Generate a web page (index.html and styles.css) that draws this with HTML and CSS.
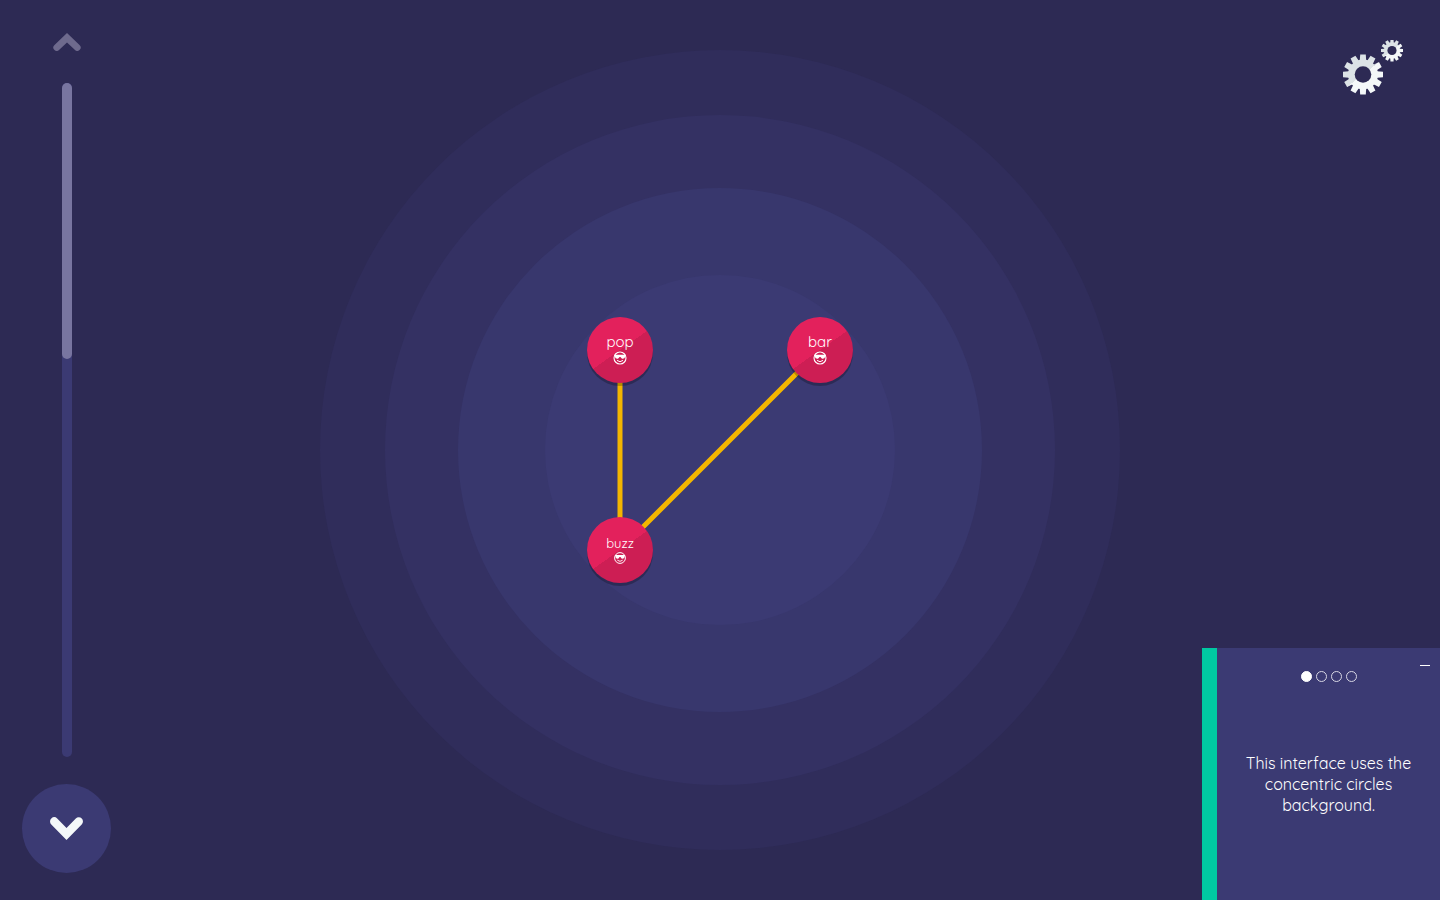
FILE: index.html
```html
<!DOCTYPE html>
<html lang="en">
<head>
<meta charset="utf-8">
<title>Concentric circles</title>
<link rel="stylesheet" href="styles.css">
</head>
<body>
<main class="app">
  <svg class="stage" viewBox="0 0 900 900" aria-label="Word graph">
    <defs>
      <linearGradient id="node-fill" gradientUnits="userSpaceOnUse" x1="-19" y1="-27" x2="19" y2="27">
        <stop offset="0.5" stop-color="#e3215c"/>
        <stop offset="0.5" stop-color="#cd1e54"/>
      </linearGradient>
      <g id="node">
        <circle class="node-shadow" cy="3" r="33"/>
        <circle r="33" fill="url(#node-fill)"/>
      </g>
      <g id="cool-face">
        <circle r="6" fill="none" stroke="#fff" stroke-width="1.100"/>
        <path d="M-5.600-3.200H5.600L4.600 0Q3.600 1 2 .8L.5-1H-.5L-2 .8Q-3.600 1-4.600 0Z" fill="#fff"/>
        <path d="M-3 2.400Q0 5 3 2.400" fill="none" stroke="#fff" stroke-width="1"/>
      </g>
    </defs>
    <circle class="ring-4" cx="450" cy="450" r="400"/>
    <circle class="ring-3" cx="450" cy="450" r="335"/>
    <circle class="ring-2" cx="450" cy="450" r="262"/>
    <circle class="ring-1" cx="450" cy="450" r="175"/>
    <path class="edge" d="M350 350V550L550 350"/>
    <g transform="translate(350 350)"><use href="#node"/><text class="label" y="-3">pop</text><use href="#cool-face" y="8"/></g>
    <g transform="translate(550 350)"><use href="#node"/><text class="label" y="-3">bar</text><use href="#cool-face" y="8"/></g>
    <g transform="translate(350 550)"><use href="#node"/><text class="label label-small" y="-2">buzz</text><use href="#cool-face" transform="translate(0 8) scale(.9)"/></g>
  </svg>

  <nav class="pager" aria-label="Scroll">
    <button class="up" aria-label="Up" disabled>
      <svg width="28" height="18" viewBox="0 0 28 18"><path d="M1 16.500A3.300 3.300 0 0 1 1.500 12L14 0L26.500 12A3.300 3.300 0 0 1 22 17L14 9.500L6 17A3.500 3.500 0 0 1 1 16.500Z"/></svg>
    </button>
    <div class="track" role="scrollbar" aria-label="Position" aria-controls="guide" aria-orientation="vertical" aria-valuenow="0"><div class="thumb"></div></div>
    <button class="down" aria-label="Down">
      <svg width="33" height="23" viewBox="0 0 33 23"><path d="M1.300 1.500A4.200 4.200 0 0 1 7.200 1.500L16.500 11L25.800 1.500A4.200 4.200 0 0 1 31.700 7.500L16.500 23L1.300 7.500A4.200 4.200 0 0 1 1.300 1.500Z"/></svg>
    </button>
  </nav>

  <button class="settings" aria-label="Settings">
    <svg width="62" height="56" viewBox="0 0 62 56">
      <defs>
        <linearGradient id="metal" gradientUnits="userSpaceOnUse" x1="-13" y1="-17" x2="13" y2="17">
          <stop offset="0.5" stop-color="#dce3e6"/>
          <stop offset="0.5" stop-color="#f4f8f9"/>
        </linearGradient>
        <mask id="gear-mask" maskUnits="userSpaceOnUse" x="-21" y="-21" width="42" height="42">
          <g fill="#fff">
            <circle r="15"/>
            <path id="tooth" d="M-3.200-14L-2.800-20H2.800L3.200-14V14L2.800 20H-2.800L-3.200 14Z"/>
            <use href="#tooth" transform="rotate(30)"/>
            <use href="#tooth" transform="rotate(60)"/>
            <use href="#tooth" transform="rotate(90)"/>
            <use href="#tooth" transform="rotate(120)"/>
            <use href="#tooth" transform="rotate(150)"/>
          </g>
          <circle r="8.300" fill="#000"/>
        </mask>
        <g id="gear"><rect x="-21" y="-21" width="42" height="42" fill="url(#metal)" mask="url(#gear-mask)"/></g>
      </defs>
      <use href="#gear" transform="translate(21 34.500)"/>
      <use href="#gear" transform="translate(50 10.500) scale(.55)"/>
    </svg>
  </button>

  <aside class="guide" id="guide">
    <button class="minimize" aria-label="Minimize"></button>
    <div class="dots">
      <button class="dot current" aria-label="Step 1"></button>
      <button class="dot" aria-label="Step 2"></button>
      <button class="dot" aria-label="Step 3"></button>
      <button class="dot" aria-label="Step 4"></button>
    </div>
    <p class="message">This interface uses the concentric circles background.</p>
  </aside>
</main>
</body>
</html>
```
FILE: styles.css
```css
* { box-sizing: border-box; }

body {
  margin: 0;
  background: #2d2a54;
  color: #fff;
  font-family: Quicksand, Lato, "Open Sans", sans-serif;
  font-weight: 400;
}

button {
  padding: 0;
  border: 0;
  background: none;
  cursor: pointer;
}

svg { display: block; }

.app {
  display: grid;
  grid-template: 100vh / 133px 1fr 238px;
}

.stage {
  grid-area: 1 / 1 / 2 / -1;
  width: 100%;
  height: 100%;
}

.ring-4 { fill: #302d5b; }
.ring-3 { fill: #343163; }
.ring-2 { fill: #38376d; }
.ring-1 { fill: #3b3a73; }

.edge {
  fill: none;
  stroke: #f3b600;
  stroke-width: 5;
}

.node-shadow {
  fill: #000;
  opacity: 0.25;
}

.label {
  fill: #fff;
  font-size: 15px;
  text-anchor: middle;
}

.label-small { font-size: 13px; }

.pager {
  grid-area: 1 / 1;
  display: flex;
  flex-direction: column;
  align-items: center;
  padding: 33px 0 27px;
}

.up { fill: #6e6a8d; }

.track {
  flex: 1;
  width: 10px;
  margin: 32px 0 27px;
  border-radius: 5px;
  background: #3b3a73;
}

.thumb {
  height: 41%;
  border-radius: 5px;
  background: #7875a0;
}

.down {
  display: grid;
  place-items: center;
  width: 89px;
  height: 89px;
  border-radius: 50%;
  background: #3b3a73;
  fill: #f4f8f9;
}

.settings {
  grid-area: 1 / 3;
  place-self: start end;
  margin: 40px 36px 0 0;
}

.guide {
  grid-area: 1 / 3;
  align-self: end;
  display: flex;
  flex-direction: column;
  min-height: 252px;
  border-left: 15px solid #00c8a2;
  background: #3b3a73;
}

.minimize {
  align-self: flex-end;
  width: 10px;
  height: 6px;
  margin: 12px 10px 0 0;
  border-bottom: 1px solid #fff;
}

.dots {
  display: flex;
  justify-content: center;
  gap: 4px;
  margin-top: 5px;
}

.dot {
  width: 11px;
  height: 11px;
  border: 1px solid #d8d7e4;
  border-radius: 50%;
}

.current {
  border-color: #fff;
  background: #fff;
}

.message {
  flex: 1;
  display: grid;
  place-items: center;
  margin: 0;
  padding: 0 20px 14px;
  font-size: 16px;
  line-height: 21px;
  text-align: center;
}
```
